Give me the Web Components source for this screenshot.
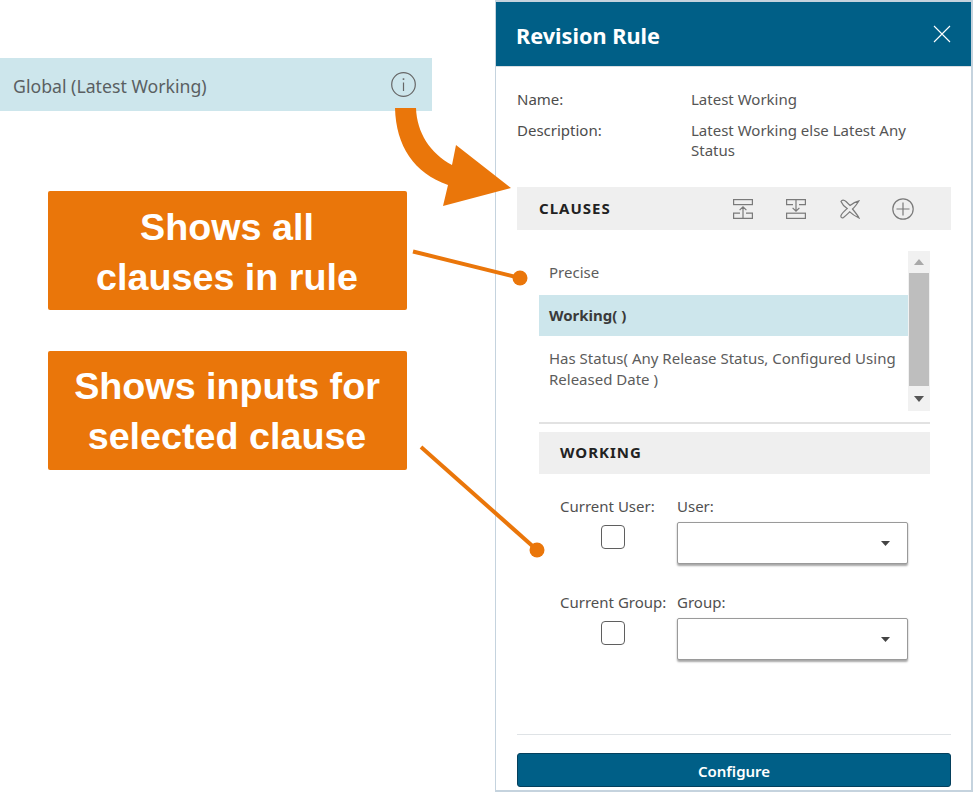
<!DOCTYPE html>
<html lang="en">
<head>
<meta charset="utf-8">
<title>Revision Rule</title>
<style>
    html, body { margin: 0; padding: 0; background: #fff; }
    body { font-family: "Noto Sans", "Open Sans", sans-serif; color: #555; }
</style>
</head>
<body>
<rule-page>
    <div slot="left">
        <rule-bar>Global (Latest Working)</rule-bar>
        <call-out style="margin-top: 80px; --nudge: 2px">Shows all<br>clauses in rule</call-out>
        <call-out style="margin-top: 41px">Shows inputs for<br>selected clause</call-out>
    </div>
    <revision-panel slot="panel" heading="Revision Rule">
        <prop-row label="Name:">Latest Working</prop-row>
        <prop-row label="Description:">Latest Working else Latest Any Status</prop-row>
        <section-bar style="margin-top: 27px; height: 43px; padding-left: 22px">
            CLAUSES
            <clause-tools slot="tools"></clause-tools>
        </section-bar>
        <clause-list>
            <clause-item>Precise</clause-item>
            <clause-item selected>Working( )</clause-item>
            <clause-item style="padding-top: 12px">Has Status( Any Release Status, Configured Using Released Date )</clause-item>
        </clause-list>
        <div style="margin: 11px 21px 0 22px; border-top: 2px solid #e2e2e2"></div>
        <section-bar style="margin: 8px 21px 0 22px; height: 42px; padding-left: 21px">WORKING</section-bar>
        <input-row check="Current User:" field="User:" style="margin-top: 22px"></input-row>
        <input-row check="Current Group:" field="Group:" style="margin-top: 28px"></input-row>
        <config-footer slot="footer">Configure</config-footer>
    </revision-panel>
    <callout-lines slot="overlay"></callout-lines>
</rule-page>

<script>
class RulePage extends HTMLElement {
    constructor() {
        super();
        this.attachShadow({ mode: 'open' });
        this.shadowRoot.innerHTML = `
            <style>
                :host { display: block; position: relative; width: 973px; height: 792px; overflow: hidden; }
                .wrap { display: flex; height: 100%; }
                .left { width: 495px; flex: none; padding-top: 58px; box-sizing: border-box; }
            </style>
            <div class="wrap">
                <div class="left"><slot name="left"></slot></div>
                <slot name="panel"></slot>
            </div>
            <slot name="overlay"></slot>
        `;
    }
}

class RuleBar extends HTMLElement {
    constructor() {
        super();
        this.attachShadow({ mode: 'open' });
        this.shadowRoot.innerHTML = `
            <style>
                :host { display: flex; align-items: center; justify-content: space-between; box-sizing: border-box;
                        width: 432px; height: 53px; padding: 0 17px 0 13px; background: #cde6ec; color: #5a5f62; font-size: 17.7px; }
                span { padding-top: 2px; }
                svg { display: block; margin-right: -1px; }
            </style>
            <span><slot></slot></span>
            <svg width="25" height="25" viewBox="0 0 25 25" fill="none" stroke="#666" stroke-width="1.2">
                <circle cx="12.5" cy="12.5" r="11.8"/>
                <path d="M12.5 10.5v8.5"/>
                <path d="M12.5 6.3v1.6" stroke-width="1.6"/>
            </svg>
        `;
    }
}

class CallOut extends HTMLElement {
    constructor() {
        super();
        this.attachShadow({ mode: 'open' });
        this.shadowRoot.innerHTML = `
            <style>
                :host { display: flex; align-items: center; justify-content: center; box-sizing: border-box;
                        width: 359px; height: 119px; margin-left: 48px; border-radius: 2px; background: #ea760a; color: #fff;
                        font: bold 37.7px/50px "Liberation Sans", Arial, sans-serif; text-align: center; }
                div { padding-top: var(--nudge, 0); margin-left: -1px; }
            </style>
            <div><slot></slot></div>
        `;
    }
}

class RevisionPanel extends HTMLElement {
    constructor() {
        super();
        this.attachShadow({ mode: 'open' });
        this.shadowRoot.innerHTML = `
            <style>
                :host { display: flex; flex-direction: column; box-sizing: border-box; width: 478px; height: 792px;
                        border: 2px solid #c5d3de; border-left-width: 1.5px; background: #fff; }
                header { display: flex; align-items: center; justify-content: space-between; flex: none; height: 64px;
                         padding: 0 21px 0 20px; background: #005f87; color: #fff; font-size: 21.7px; font-weight: 700; }
                header span { padding-top: 3px; }
                svg { display: block; margin-right: -1px; }
                .line { flex: none; height: 1px; background: #d9dee2; }
                .body { flex: 1; padding: 22px 20px 0 21px; }
            </style>
            <header>
                <span id="title"></span>
                <svg width="18" height="18" viewBox="0 0 18 18" stroke="#fff" stroke-width="1.1"><path d="M1 1l16 16M17 1L1 17"/></svg>
            </header>
            <div class="line"></div>
            <div class="body"><slot></slot></div>
            <slot name="footer"></slot>
        `;
    }
    connectedCallback() {
        this.shadowRoot.getElementById('title').textContent = this.getAttribute('heading') || '';
    }
}

class PropRow extends HTMLElement {
    constructor() {
        super();
        this.attachShadow({ mode: 'open' });
        this.shadowRoot.innerHTML = `
            <style>
                :host { display: grid; grid-template-columns: 174px 240px; font-size: 15px; line-height: 20px; margin-bottom: 11px; color: #555; }
                .l { color: #4c4c4c; }
            </style>
            <div class="l" id="label"></div>
            <div><slot></slot></div>
        `;
    }
    connectedCallback() {
        this.shadowRoot.getElementById('label').textContent = this.getAttribute('label');
    }
}

class SectionBar extends HTMLElement {
    constructor() {
        super();
        this.attachShadow({ mode: 'open' });
        this.shadowRoot.innerHTML = `
            <style>
                :host { display: flex; align-items: center; justify-content: space-between; box-sizing: border-box;
                        background: #efefef; color: #222; font-size: 15px; font-weight: 700; letter-spacing: 1px; }
                span { padding-bottom: 2px; }
            </style>
            <span><slot></slot></span>
            <slot name="tools"></slot>
        `;
    }
}

class ClauseTools extends HTMLElement {
    constructor() {
        super();
        this.attachShadow({ mode: 'open' });
        this.shadowRoot.innerHTML = `
            <style>
                :host { display: flex; align-items: center; margin-right: 37px; }
                svg { display: block; margin-left: 33px; }
                g { fill: none; stroke: #7a7a7a; stroke-width: 1.2; }
            </style>
            <svg width="20" height="20" viewBox="0 0 20 20"><g>
                <rect x=".6" y=".6" width="18.8" height="5"/>
                <path d="M7 14.2H.6v5.2h18.8v-5.2H13M10 18.8V8M6.6 11.2L10 7.8l3.4 3.4"/>
            </g></svg>
            <svg width="20" height="20" viewBox="0 0 20 20"><g>
                <rect x=".6" y="14.2" width="18.8" height="5.2"/>
                <path d="M7 5.6H.6V.6h18.8v5H13M10 1.2V12M6.6 8.8L10 12.2l3.4-3.4"/>
            </g></svg>
            <svg width="20" height="20" viewBox="0 0 20 20" style="margin-left: 34px"><g>
                <path d="M1 2.5C2 .5 4 .8 6 2.500L10 6.500C13 4 16 2.500 19 1.800C17 5 15 8 12.500 10C15 13 17.500 16 19 19C15 17 12 15 9.800 12.800C8 14.500 5.500 17 3.500 18.500C2 19.500 .5 18.500 1 16.500C2 14 5 11.500 7.200 9.500C5 8 2 5 1 2.500Z"/>
            </g></svg>
            <svg width="22" height="22" viewBox="0 0 22 22" style="margin-left: 32px"><g>
                <circle cx="11" cy="11" r="10.2"/>
                <path d="M11 4.500v13M4.500 11h13"/>
            </g></svg>
        `;
    }
}

class ClauseList extends HTMLElement {
    constructor() {
        super();
        this.attachShadow({ mode: 'open' });
        this.shadowRoot.innerHTML = `
            <style>
                :host { display: flex; box-sizing: border-box; height: 160px; margin: 21px 21px 0 22px; }
                .items { flex: 1; min-width: 0; }
                .bar { display: flex; flex-direction: column; align-items: center; flex: none; width: 22px; background: #f1f1f1; }
                .btn { flex: none; height: 22px; display: flex; align-items: center; justify-content: center; }
                .btn.down { height: 25px; }
                .thumb { flex: 1; width: 20px; background: #bebebe; }
                svg { display: block; }
            </style>
            <div class="items"><slot></slot></div>
            <div class="bar">
                <div class="btn"><svg width="10" height="6" viewBox="0 0 10 6"><path d="M5 0l5 6H0z" fill="#a9a9a9"/></svg></div>
                <div class="thumb"></div>
                <div class="btn down"><svg width="10" height="6" viewBox="0 0 10 6"><path d="M0 0h10L5 6z" fill="#555"/></svg></div>
            </div>
        `;
    }
}

class ClauseItem extends HTMLElement {
    constructor() {
        super();
        this.attachShadow({ mode: 'open' });
        this.shadowRoot.innerHTML = `
            <style>
                :host { display: block; box-sizing: border-box; padding: 11px 10px 12px 10px; font-size: 15px; line-height: 21px; color: #5c5c5c; }
                :host([selected]) { padding: 10px 10px; background: #cde6ec; color: #3a3a3a; font-weight: 700; }
            </style>
            <slot></slot>
        `;
    }
}

class InputRow extends HTMLElement {
    constructor() {
        super();
        this.attachShadow({ mode: 'open' });
        this.shadowRoot.innerHTML = `
            <style>
                :host { display: grid; grid-template-columns: 117px 231px; margin-left: 43px; font-size: 15px; line-height: 20px; color: #505050; }
                .c { display: flex; flex-direction: column; white-space: nowrap; }
                .box { box-sizing: border-box; width: 24px; height: 24px; margin: 9px 0 0 41px; border: 1.5px solid #5f5f5f; border-radius: 4px; background: #fff; }
                .sel { display: flex; align-items: center; justify-content: flex-end; box-sizing: border-box; height: 42px; margin-top: 6px;
                       padding-right: 17px; border: 1px solid #9a9a9a; border-radius: 2px; background: #fff; box-shadow: 0 1.5px 2px rgba(0,0,0,.35); }
                svg { display: block; }
            </style>
            <div class="c"><span id="check"></span><div class="box"></div></div>
            <div class="c"><span id="field"></span>
                <div class="sel"><svg width="9" height="5" viewBox="0 0 9 5"><path d="M0 0h9L4.500 5z" fill="#444"/></svg></div>
            </div>
        `;
    }
    connectedCallback() {
        this.shadowRoot.getElementById('check').textContent = this.getAttribute('check');
        this.shadowRoot.getElementById('field').textContent = this.getAttribute('field');
    }
}

class ConfigFooter extends HTMLElement {
    constructor() {
        super();
        this.attachShadow({ mode: 'open' });
        this.shadowRoot.innerHTML = `
            <style>
                :host { display: block; flex: none; padding: 0 20px 3px 21px; }
                .rule { border-top: 1px solid #dfe3e6; margin-bottom: 18px; }
                button { display: block; box-sizing: border-box; width: 100%; height: 34px; padding: 2px 0 0; border: 1px solid #043f5c; border-radius: 3px;
                         background: #005f87; color: #fff; font: 600 15px "Noto Sans", sans-serif; }
            </style>
            <div class="rule"></div>
            <button><slot></slot></button>
        `;
    }
}

class CalloutLines extends HTMLElement {
    constructor() {
        super();
        this.attachShadow({ mode: 'open' });
        this.shadowRoot.innerHTML = `
            <style>
                :host { position: absolute; left: 0; top: 0; width: 973px; height: 792px; pointer-events: none; }
                svg { display: block; }
            </style>
            <svg width="973" height="792" viewBox="0 0 973 792" fill="#ea760a" stroke="none">
                <path d="M395 108H416C417 133 430 153 452 165L456 145L511 188L443 206L448 185C414 173 396 146 395 108Z"/>
                <path d="M413 251.500L520 278" stroke="#ea760a" stroke-width="4"/>
                <circle cx="520" cy="278" r="7.500"/>
                <path d="M421 447L537 550" stroke="#ea760a" stroke-width="4"/>
                <circle cx="537" cy="550" r="7.500"/>
            </svg>
        `;
    }
}

customElements.define('rule-page', RulePage);
customElements.define('rule-bar', RuleBar);
customElements.define('call-out', CallOut);
customElements.define('revision-panel', RevisionPanel);
customElements.define('prop-row', PropRow);
customElements.define('section-bar', SectionBar);
customElements.define('clause-tools', ClauseTools);
customElements.define('clause-list', ClauseList);
customElements.define('clause-item', ClauseItem);
customElements.define('input-row', InputRow);
customElements.define('config-footer', ConfigFooter);
customElements.define('callout-lines', CalloutLines);
</script>
</body>
</html>
